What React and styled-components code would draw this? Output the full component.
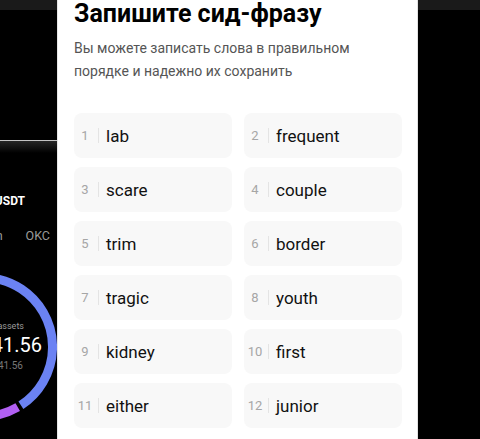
import React from "react";
import styled, { createGlobalStyle } from "styled-components";

const GlobalStyle = createGlobalStyle`
  html, body {
    margin: 0;
    padding: 0;
    background: #000;
  }
  body {
    font-family: Roboto, "Noto Sans", "Liberation Sans", sans-serif;
  }
`;

const Screen = styled.div`
  width: 480px;
  height: 439px;
  display: flex;
  overflow: hidden;
  background: #000;
`;

const Backdrop = styled.div`
  width: ${(p) => p.$width}px;
  flex-shrink: 0;
  display: flex;
  flex-direction: column;
  overflow: hidden;
`;

const TopStrip = styled.div`
  height: 10px;
  flex-shrink: 0;
  background: #1a1a1a;
`;

const Spacer = styled.div`
  height: ${(p) => p.$h}px;
  flex-shrink: 0;
`;

const HeaderEdge = styled.div`
  height: 12px;
  flex-shrink: 0;
  border-top: 1px solid #c4c4c4;
  background: linear-gradient(#262626, #000);
`;

const RightRow = styled.div`
  display: flex;
  justify-content: flex-end;
  align-items: center;
  white-space: nowrap;
  height: ${(p) => p.$h}px;
  padding-right: ${(p) => p.$pr}px;
  gap: ${(p) => p.$gap || 0}px;
  flex-shrink: 0;
`;

const Balance = styled.span`
  color: #fff;
  font-weight: 700;
  font-size: 12px;
`;

const Chain = styled.span`
  color: #9a9a9a;
  font-size: 12.5px;
`;

const DonutWrap = styled.div`
  display: flex;
  justify-content: flex-end;
  flex-shrink: 0;
`;

const Donut = styled.div`
  position: relative;
  width: 148px;
  height: 148px;
  flex-shrink: 0;
`;

const DonutLabel = styled.div`
  position: absolute;
  inset: 0;
  display: flex;
  flex-direction: column;
  justify-content: center;
  align-items: flex-end;
  padding-bottom: 2px;
  white-space: nowrap;
`;

const LabelLine = styled.div`
  margin-right: ${(p) => p.$mr}px;
  font-size: ${(p) => p.$size}px;
  line-height: ${(p) => p.$lh}px;
  color: ${(p) => p.$color};
`;

const Panel = styled.div`
  width: 361px;
  flex-shrink: 0;
  box-sizing: border-box;
  background: #fff;
  border-left: 1px solid #e6e6e6;
  border-right: 1px solid #e2e2e2;
  padding: 0 15px 0 16px;
`;

const Title = styled.h1`
  margin: 0;
  font-size: 25px;
  line-height: 28px;
  font-weight: 700;
  color: #000;
`;

const Subtitle = styled.p`
  margin: 9px 0 0;
  font-size: 14px;
  line-height: 23px;
  color: #555;
`;

const WordGrid = styled.div`
  margin-top: 30px;
  display: grid;
  grid-template-columns: 1fr 1fr;
  column-gap: 12px;
  row-gap: 9px;
`;

const WordCard = styled.div`
  height: 45px;
  border-radius: 8px;
  background: #f8f8f8;
  display: flex;
  align-items: center;
`;

const Index = styled.span`
  width: 22px;
  text-align: center;
  font-size: 13px;
  color: #a6a6a6;
`;

const Sep = styled.span`
  width: 1px;
  height: 15px;
  margin-left: 2px;
  background: #e4e4e4;
`;

const Word = styled.span`
  margin-left: 7px;
  font-size: 17px;
  color: #111;
`;

const words = [
  "lab",
  "frequent",
  "scare",
  "couple",
  "trim",
  "border",
  "tragic",
  "youth",
  "kidney",
  "first",
  "either",
  "junior",
];

const App = () => {
  return (
    <>
      <GlobalStyle />
      <Screen>
        <Backdrop $width={57}>
          <TopStrip />
          <Spacer $h={130} />
          <HeaderEdge />
          <Spacer $h={36} />
          <RightRow $h={24} $pr={32}>
            <Balance>≈ 41.56 USDT</Balance>
          </RightRow>
          <Spacer $h={10} />
          <RightRow $h={24} $pr={7} $gap={23}>
            <Chain>Ethereum</Chain>
            <Chain>OKC</Chain>
          </RightRow>
          <Spacer $h={26} />
          <DonutWrap>
            <Donut>
              <svg width="148" height="148" viewBox="0 0 148 148">
                <path
                  d="M 5.6 61.9 A 69.5 69.5 0 1 1 111.9 132.3"
                  fill="none"
                  stroke="#6b82f3"
                  strokeWidth="9"
                />
                <path
                  d="M 108.75 134.2 A 69.5 69.5 0 0 1 4.8 67.9"
                  fill="none"
                  stroke="#b15ff2"
                  strokeWidth="9"
                />
              </svg>
              <DonutLabel>
                <LabelLine $mr={33} $size={9} $lh={14} $color="#9a9a9a">
                  Total assets
                </LabelLine>
                <LabelLine $mr={15} $size={20} $lh={24} $color="#fff">
                  $41.56
                </LabelLine>
                <LabelLine $mr={34} $size={10} $lh={17} $color="#777">
                  ≈ $41.56
                </LabelLine>
              </DonutLabel>
            </Donut>
          </DonutWrap>
        </Backdrop>

        <Panel>
          <Title>Запишите сид-фразу</Title>
          <Subtitle>
            Вы можете записать слова в правильном
            <br />
            порядке и надежно их сохранить
          </Subtitle>
          <WordGrid>
            {words.map((w, i) => (
              <WordCard key={w}>
                <Index>{i + 1}</Index>
                <Sep />
                <Word>{w}</Word>
              </WordCard>
            ))}
          </WordGrid>
        </Panel>

        <Backdrop $width={62}>
          <TopStrip />
        </Backdrop>
      </Screen>
    </>
  );
};

export default App;
